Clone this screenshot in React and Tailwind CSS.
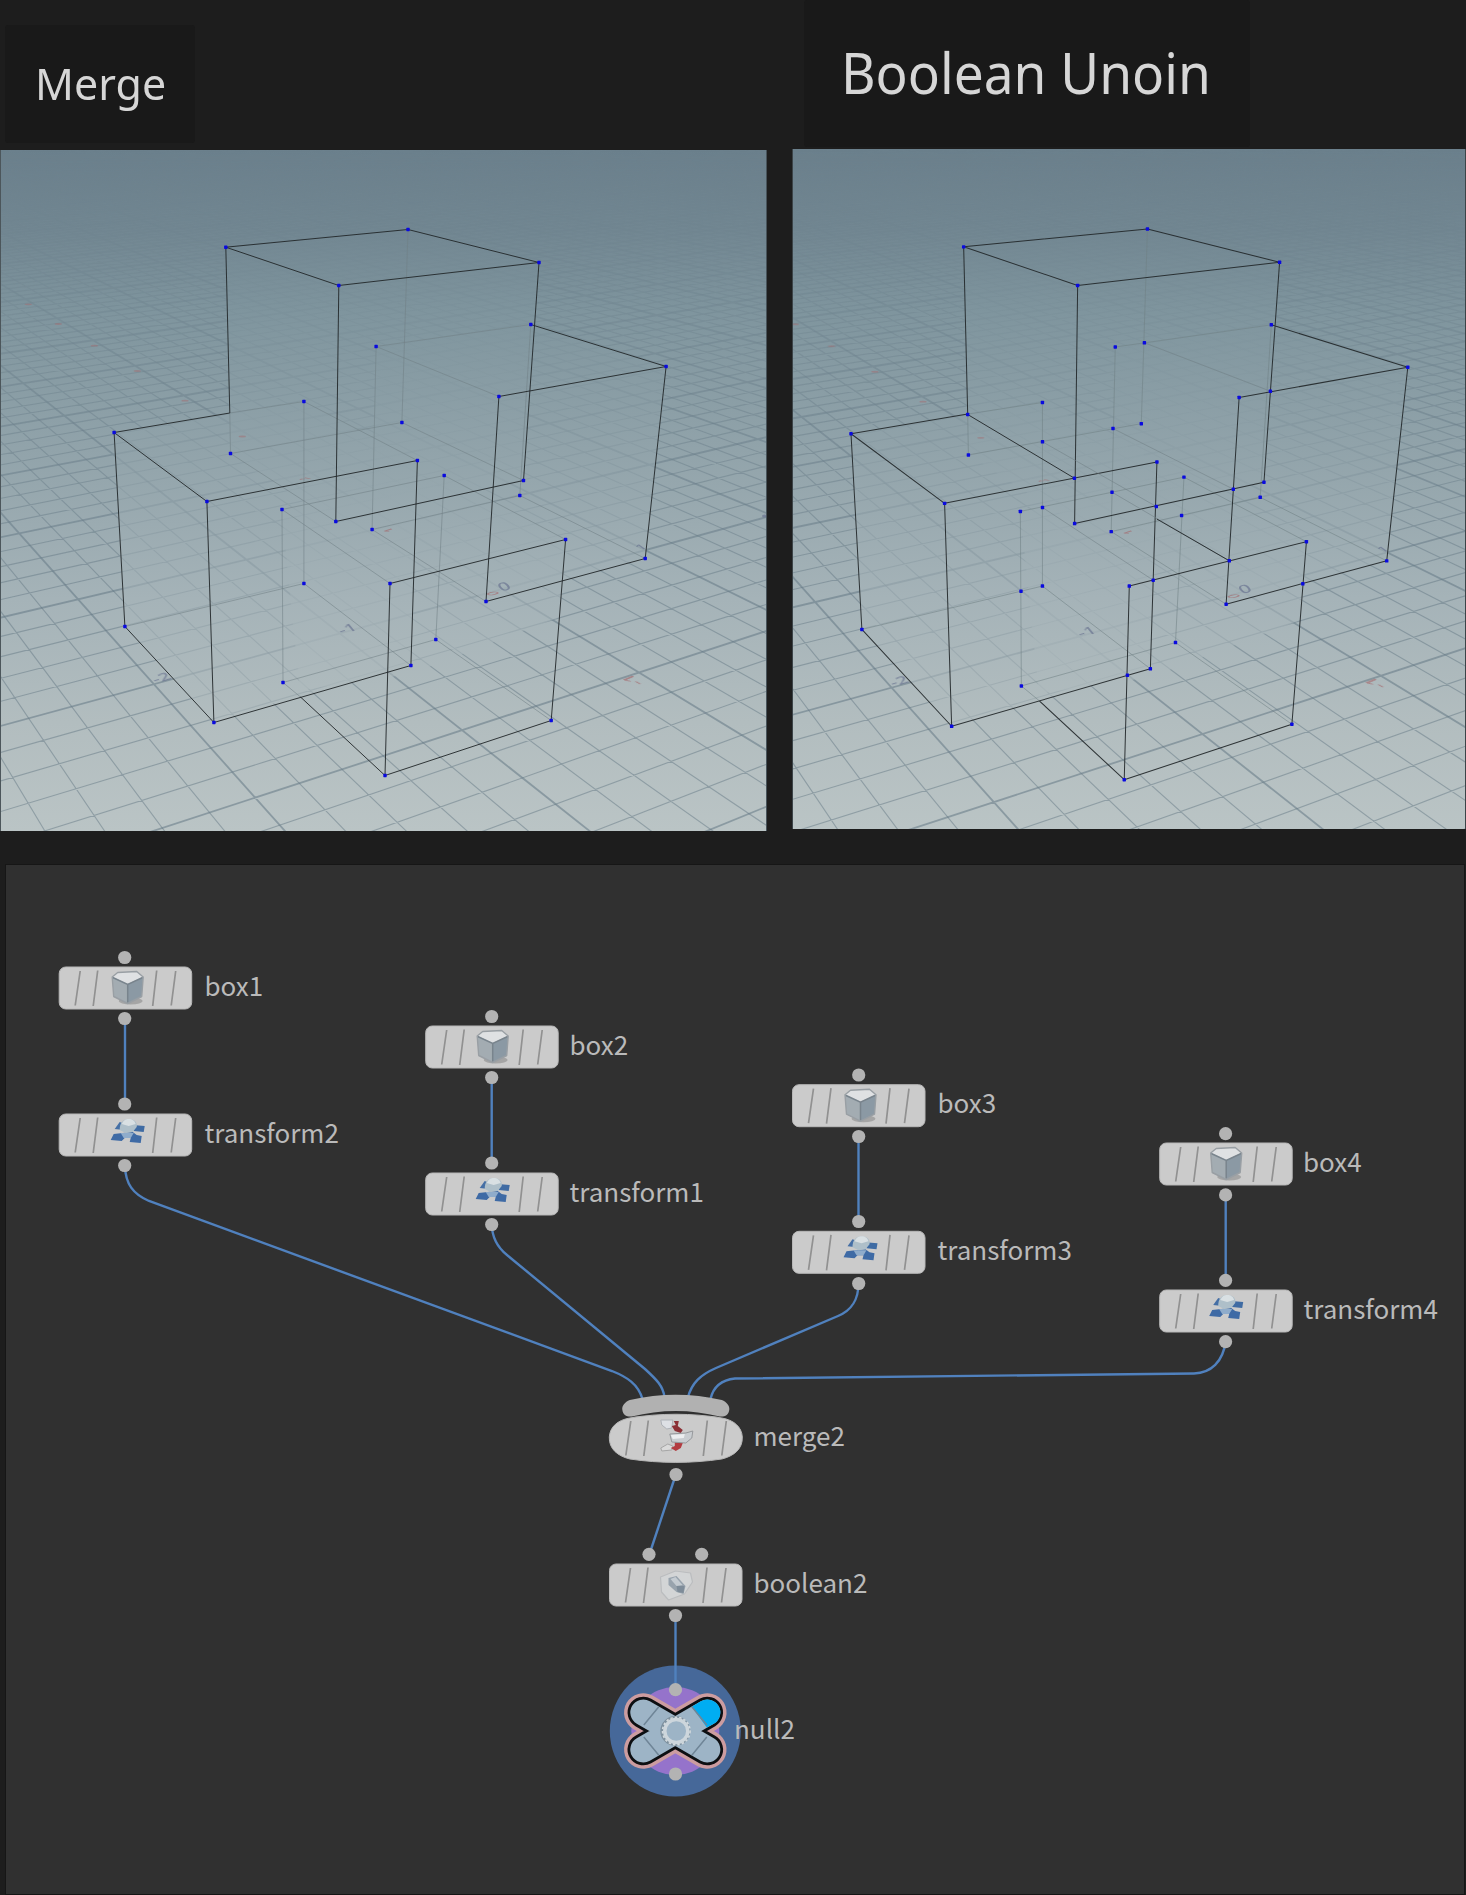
import React from "react";

/* ---------- ground plane projection ---------- */

// [grid u, grid v, screen x, screen y]
const ANCHORS = [
  [1, 1, 153.3, 684.3],
  [1, 2, 254, 797.7],
  [2, 2, 462.7, 730],
  [3, 2, 639.3, 672.3],
  [4, 1, 645, 550.3],
  [1, 0, 79, 600],
  [3, 1, 502, 588.8],
  [3, -3, 184, 396],
  [2, -3, 64, 415],
  [1, -1, 19.6, 533.4],
];

function solve(m, r) {
  const n = r.length;
  const a = m.map((row, i) => [...row, r[i]]);
  for (let c = 0; c < n; c++) {
    let p = c;
    for (let i = c + 1; i < n; i++) if (Math.abs(a[i][c]) > Math.abs(a[p][c])) p = i;
    [a[c], a[p]] = [a[p], a[c]];
    for (let i = 0; i < n; i++) {
      if (i === c) continue;
      const f = a[i][c] / a[c][c];
      for (let k = c; k <= n; k++) a[i][k] -= f * a[c][k];
    }
  }
  return a.map((row, i) => row[n] / row[i]);
}

function fitPlane() {
  const rows = [];
  const rhs = [];
  ANCHORS.forEach(([u, v, x, y]) => {
    rows.push([u, v, 1, 0, 0, 0, -u * x, -v * x]);
    rhs.push(x);
    rows.push([0, 0, 0, u, v, 1, -u * y, -v * y]);
    rhs.push(y);
  });
  const ata = Array.from({ length: 8 }, (_, i) =>
    Array.from({ length: 8 }, (_, j) => rows.reduce((s, r) => s + r[i] * r[j], 0))
  );
  const atb = Array.from({ length: 8 }, (_, i) => rows.reduce((s, r, k) => s + r[i] * rhs[k], 0));
  return solve(ata, atb);
}

const H = fitPlane();
const project = (u, v) => {
  const w = H[6] * u + H[7] * v + 1;
  return [(H[0] * u + H[1] * v + H[2]) / w, (H[3] * u + H[4] * v + H[5]) / w];
};

function gridPath(fixed, from, to, major) {
  let d = "";
  for (let i = from * 5; i <= to * 5; i++) {
    if ((i % 5 === 0) !== major) continue;
    const t = i / 5;
    const p = fixed === "v" ? project(1, t) : project(t, 1);
    const q = fixed === "v" ? project(3, t) : project(t, -2);
    const s = (q[1] - p[1]) / (q[0] - p[0]);
    d += `M-10 ${(p[1] + s * (-10 - p[0])).toFixed(1)}L790 ${(p[1] + s * (790 - p[0])).toFixed(1)}`;
  }
  return d;
}

const MINOR = gridPath("v", -36, 4, false) + gridPath("u", 0, 36, false);
const MAJOR = gridPath("v", -36, 4, true) + gridPath("u", 0, 36, true);

/* ---------- boxes ---------- */

const P = {
  a0: [225.3, 246.7], a1: [407.5, 229], a2: [538.5, 262], a3: [338.3, 285],
  a4: [230, 453], a5: [401.4, 422], a6: [523, 480], a7: [335.3, 521],
  c0: [375.6, 346], c1: [530.3, 324], c2: [665.6, 366], c3: [498.4, 396],
  c4: [371.6, 529], c5: [519.3, 495], c6: [644.7, 558], c7: [485.5, 601],
  l0: [113.6, 432], l1: [303.4, 401], l2: [416.9, 460], l3: [206.4, 501],
  l4: [124.4, 626], l5: [303.4, 583], l6: [410.4, 665], l7: [213.4, 722],
  f0: [281.5, 509], f1: [443.7, 475], f2: [565.1, 539], f3: [389.5, 583],
  f4: [282.5, 682], f5: [435.3, 639], f6: [550.7, 720], f7: [384.5, 775],
  m: [229.3, 412.5], n: [300, 696.5],
};
const path = (list) =>
  list
    .split(" ")
    .map((e) => {
      const [s, t] = e.split("-");
      return `M${P[s]}L${P[t]}`;
    })
    .join("");

const DARK = path(
  "a0-a1 a1-a2 a2-a3 a3-a0 a0-m a3-a7 a2-a6 a7-a6 c1-c2 c2-c3 c3-c7 c2-c6 c7-c6 l0-m l0-l3 l3-l2 l0-l4 l3-l7 l2-l6 l4-l7 l7-l6 f3-f2 f3-f7 f2-f6 n-f7 f7-f6"
);
const FAINT = path(
  "m-a4 a1-a5 a4-a5 c0-c1 c0-c4 c1-c5 c4-c5 c5-c6 m-l1 l1-l5 l4-l5 l5-l6 f0-f1 f0-f4 f1-f5 f4-f5 f5-f6 f4-n c4-c7 f1-f2"
);
const FAINT_MERGE = path("a4-a7 a5-a6 c0-c3 l1-l2 f0-f3");

const POINTS = Object.entries(P).filter(([k]) => k !== "m" && k !== "n").map(([, p]) => p);

const UNION_POINTS = [
  [967.7, 414], [1144.4, 342.3], [1270.4, 390.7], [1042.5, 441.3], [1113, 428],
  [1074.4, 477.7], [1156.3, 506], [1233.3, 488.7], [1112, 491.7], [1181.6, 515],
  [1042.5, 507], [1229.3, 560.3], [1153.2, 579.7], [1302.8, 583.3], [1021, 590.7],
  [1127.4, 674.7],
];

const HULLS = [
  "225.3,246.7 407.5,229 538.5,262 523,480 335.3,521 230,453",
  "375.6,346 530.3,324 665.6,366 644.7,558 485.5,601 371.6,529",
  "113.6,432 303.4,401 416.9,460 410.4,665 213.4,722 124.4,626",
  "281.5,509 443.7,475 565.1,539 560,617 410,674 300,690",
];

const RED_TICKS = [
  [242.3, 436.5], [185, 400.7], [137.3, 371], [94.3, 345.7], [58.3, 324], [28.3, 304.3],
];

function Sky({ id, top, bottom }) {
  return (
    <defs>
      <linearGradient id={id} gradientUnits="userSpaceOnUse" x1="0" x2="0" y1={top} y2={bottom}>
        <stop offset="0" stopColor="#6b808c" />
        <stop offset="0.12" stopColor="#728792" />
        <stop offset="0.24" stopColor="#7f959e" />
        <stop offset="0.44" stopColor="#91a3aa" />
        <stop offset="0.66" stopColor="#a5b3b8" />
        <stop offset="0.84" stopColor="#b2bdbf" />
        <stop offset="1" stopColor="#bac4c5" />
      </linearGradient>
      <linearGradient id={id + "-fade"} gradientUnits="userSpaceOnUse" x1="0" x2="0" y1={top} y2={bottom}>
        <stop offset="0" stopColor="#fff" stopOpacity="0" />
        <stop offset="0.08" stopColor="#fff" stopOpacity="0.1" />
        <stop offset="0.2" stopColor="#fff" stopOpacity="0.42" />
        <stop offset="0.4" stopColor="#fff" stopOpacity="0.8" />
        <stop offset="0.65" stopColor="#fff" stopOpacity="1" />
      </linearGradient>
      <mask id={id + "-mask"} maskUnits="userSpaceOnUse" x="-20" y="100" width="820" height="760">
        <rect x="-20" y="100" width="820" height="760" fill={`url(#${id}-fade)`} />
      </mask>
    </defs>
  );
}

function Ground({ id, edgeMark }) {
  return (
    <g>
      <g mask={`url(#${id}-mask)`} fill="none" stroke="#657985">
        <path d={MINOR} strokeWidth="1.1" opacity="0.5" />
        <path d={MAJOR} strokeWidth="1.8" opacity="0.55" />
      </g>
      {HULLS.map((h) => (
        <polygon key={h} points={h} fill={`url(#${id})`} opacity="0.58" />
      ))}
      <g fontFamily="'Noto Sans', sans-serif" fontSize="17" fontWeight="500" textAnchor="middle" opacity="0.65">
        <g fill="#66708e">
          <text transform="matrix(1.1 -.34 .5 .6 164 681)">-2</text>
          <text transform="matrix(1.1 -.34 .5 .6 350 632)">-1</text>
          <text transform="matrix(1.1 -.34 .5 .6 507 590)">0</text>
          <text transform="matrix(.9 -.24 .5 .35 644 549)">1</text>
          {edgeMark && <ellipse cx="764.500" cy="516" rx="2.500" ry="1.500" />}
        </g>
        <g fill="#a5686c">
          <text transform="matrix(-1.1 -.6 .8 -.34 637 678)">-1</text>
          <text transform="matrix(-.9 -.2 .7 -.24 497 592)">0</text>
          <text transform="matrix(-.8 -.3 .6 -.2 392 529)">1</text>
          <text transform="matrix(-.7 -.1 .6 -.15 308 478)">2</text>
          {RED_TICKS.map(([x, y]) => (
            <ellipse key={x} cx={x} cy={y} rx="3.6" ry="0.9" opacity="0.7" />
          ))}
        </g>
      </g>
    </g>
  );
}

function Dots({ points }) {
  return points.map(([x, y]) => (
    <rect key={`${x},${y}`} x={x - 1.7} y={y - 1.7} width="3.4" height="3.4" rx="0.6" fill="#0a0adf" />
  ));
}

const LINE = { fill: "none", stroke: "#23282a", strokeWidth: 1, opacity: 0.92 };
const HIDDEN = { fill: "none", stroke: "#6f7f84", strokeWidth: 0.9, opacity: 0.6 };

function MergeView() {
  return (
    <svg viewBox="0 150 767 681" className="block h-[681px] w-[767px]">
      <Sky id="sky1" top="149" bottom="831" />
      <rect x="0" y="149" width="767" height="683" fill="url(#sky1)" />
      <Ground id="sky1" edgeMark />
      <g transform="translate(.5 .5)">
        <path d={FAINT + FAINT_MERGE} {...HIDDEN} />
        <path d={DARK} {...LINE} />
        <Dots points={POINTS} />
      </g>
      <path d="M.5 149V832" stroke="#4c565b" />
      <path d="M766.500 149V832" stroke="#48545b" />
    </svg>
  );
}

function UnionView() {
  return (
    <svg viewBox="792 149 674 680" className="block h-[680px] w-[674px]">
      <g transform="translate(736.4 -2.5) scale(1.0087)">
        <Sky id="sky2" top="150" bottom="825" />
        <rect x="40" y="148" width="700" height="685" fill="url(#sky2)" />
        <Ground id="sky2" />
      </g>
      <g transform="translate(0 .5)">
        <g transform="translate(736.4 -2.5) scale(1.0087)">
          <path d={FAINT} {...HIDDEN} />
          <path d={DARK} {...LINE} />
        </g>
        <path
          d="M1144.4 342.3L1270.4 390.7M1113 428L1233.3 488.7M1042.5 441.3L1156.3 506M1112 491.7L1229.3 560.3M1042.5 507L1153.2 579.7"
          {...HIDDEN}
        />
        <path d="M967.7 414L1074.4 477.7M1156.8 518.5L1229.3 560.3" {...LINE} />
        <g transform="translate(736.4 -2.5) scale(1.0087)">
          <Dots points={POINTS} />
        </g>
        <Dots points={UNION_POINTS} />
      </g>
      <path d="M1465.5 148V830M792.500 148V830" stroke="#3c4448" />
    </svg>
  );
}

/* ---------- node graph ---------- */

const NODES = [
  { name: "box1", type: "box", x: 125.2, y: 988, ix: 2.5, lx: 204.5 },
  { name: "transform2", type: "xform", x: 125.2, y: 1135, ix: 2.5, lx: 204.5 },
  { name: "box2", type: "box", x: 491.7, y: 1047, ix: 1, lx: 569.5 },
  { name: "transform1", type: "xform", x: 491.7, y: 1194, ix: 1, lx: 569.5 },
  { name: "box3", type: "box", x: 858.5, y: 1105.7, ix: 2, lx: 937.5 },
  { name: "transform3", type: "xform", x: 858.5, y: 1252.3, ix: 2, lx: 937.5 },
  { name: "box4", type: "box", x: 1225.7, y: 1164, ix: 0.5, lx: 1303 },
  { name: "transform4", type: "xform", x: 1225.7, y: 1311, ix: 0.5, lx: 1303.5 },
  { name: "merge2", type: "merge", x: 675.8, y: 1438, ix: 0, lx: 753.5 },
  { name: "boolean2", type: "boolean", x: 675.5, y: 1585, ix: 0, lx: 753.5 },
  { name: "null2", type: "null", x: 675.3, y: 1731, ix: 0, lx: 734 },
];

function BoxIcon() {
  return (
    <g>
      <ellipse cx="3" cy="13" rx="12" ry="3.5" fill="#a5a5a5" />
      <path d="M-15.5-11L-14 8.500L0 15.500V-4Z" fill="#a3acb2" />
      <path d="M0-4V15.500L14 8.500L15.500-11Z" fill="#8b99a4" />
      <path d="M-15.500-11.500L-10-15.500L9-16.500L15.500-11.500L0-4Z" fill="#dfe1e3" />
      <path d="M-15-10.500L0-3.500L15-10.500M0-3.500V15" fill="none" stroke="#79848d" strokeWidth="1.5" />
      <path d="M-15.500-11L-14 8.500L0 15.500L14 8.500L15.500-11L9-16.500L-10-15.500Z" fill="none" stroke="#999fa4" strokeWidth="1.4" strokeLinejoin="round" />
    </g>
  );
}

function TransformIcon() {
  return (
    <g>
      <path d="M-8-13L-13-6L-4-5L0-10Z" fill="#456fa5" />
      <path d="M5-10L17-9L16-3L6-4Z" fill="#3f6ba3" />
      <path d="M-14-1L-5-2L5-3L9 0L14 1L13 8L2 7L3 3L-3 3L-6 6L-17 5Z" fill="#3e6aa5" />
      <path d="M-7-2L6-2L3 3L-4 3Z" fill="#8faccb" />
      <path d="M-8-5C-8-12 -5-16 1-16C7-16 10-12 9-8L5-3L-2-2Z" fill="#aebfc9" />
      <path d="M-6-11C-4-15 -2-16 1-16C5-16 7-14 8-11L1-9Z" fill="#d9e0e3" />
    </g>
  );
}

function MergeIcon() {
  return (
    <g>
      <path d="M-15-18L-3-18L-4-10L-9-9L-14-13Z" fill="#dde0e5" stroke="#aeb2b8" />
      <path d="M-15 10L-8 6L-3 8L-4 12L-14 13Z" fill="#dadada" stroke="#a6a6a6" />
      <path d="M-2-17L3-17L2-12L7-8L5-5L-1-7L-4-12L0-13Z" fill="#8b3036" />
      <path d="M-1 4L7 5L5 10L0 13L-5 10L-1 8Z" fill="#b23b40" />
      <path d="M-6-4L10-5L17-7L16 0L10 5L-4 4Z" fill="#c9cdd1" stroke="#96999c" />
      <path d="M-5-3L9-4L8 0L-3 1Z" fill="#eceef0" />
    </g>
  );
}

function BooleanIcon() {
  return (
    <g>
      <path d="M-15-8L0-14L15-12L17-3L9 9L-7 15L-14 7Z" fill="#d3d5d6" stroke="#bbbdbf" strokeWidth="1.2" strokeLinejoin="round" />
      <path d="M-7-7L1-9L10 1L8 9L1 7L-7 0Z" fill="#98a3ad" />
      <path d="M-5-6L0-8L7 0L1 1Z" fill="#c4cbd1" />
      <path d="M1 1L9 1L8 8L2 7Z" fill="#7e8c99" />
    </g>
  );
}

const ICONS = { box: BoxIcon, xform: TransformIcon, merge: MergeIcon, boolean: BooleanIcon };

function Port({ x, y }) {
  return <circle cx={x} cy={y} r="6.6" fill="#b3b3b3" />;
}

function NodeShape({ type, ix }) {
  const Icon = ICONS[type];
  const round = type === "merge";
  return (
    <g>
      {round ? (
        <>
          <path d="M-53.500-28.500C-54-32-51-36-46-38C-15-45 15-45 46-38C51-36 54-32 53.500-28.500C53-23 49-21 44-21.500C15-29 -15-29 -44-21.500C-49-21 -53-23 -53.500-28.500Z" fill="#b1b1b1" />
          <path d="M-66.500-1C-66-11-58-18-46-20C-16-25 16-25 46-20C58-18 66-11 66.500-1C67 11 58 18 46 21C16 25.500 -16 25.500 -46 21C-58 18 -67 11 -66.500-1Z" fill="#cbcbcb" stroke="#b8b8b8" />
        </>
      ) : (
        <rect x="-66" y="-21" width="132.500" height="42" rx="6.500" fill="#cbcbcb" stroke="#b8b8b8" />
      )}
      <path
        d="M-45-17L-50 17.500M-27.500-17.500L-32 18M31.500-17.500L27.500 18M50.500-17L46 17.500"
        fill="none"
        stroke="#919191"
        strokeWidth="1.7"
      />
      <g transform={`translate(${ix} 0)`}>
        <Icon />
      </g>
    </g>
  );
}

function NullNode() {
  const arms = "M-32-18.500L32 18.500M-32 18.500L32-18.500";
  return (
    <g>
      <circle r="65.500" fill="#466899" />
      <circle r="44" fill="#9573cb" />
      <g fill="none" strokeLinecap="round">
        <path d={arms} stroke="#cc9ca0" strokeWidth="38.500" />
        <path d={arms} stroke="#0d0f12" strokeWidth="31.500" />
        <path d={arms} stroke="#9db4c6" strokeWidth="26" />
      </g>
      <path d="M16.500-24.200L25.600-29.800A13 13 0 0 1 38.500-7.200L31.500-3.500Z" fill="#00adf2" />
      <path d="M16.500-24.200L31.500-6M-16.500-24.200L-31.500-6M-16.500 24.200L-31.500 6M16.500 24.200L31.500 6" stroke="#6f8597" strokeWidth="1.500" />
      <circle r="13.500" fill="#9db4c6" stroke="#7d909e" strokeWidth="3" />
      <circle r="11.500" cx="1" fill="#9db4c6" stroke="#cdd6dc" strokeWidth="3.500" />
      <circle r="13.800" cx="1" fill="none" stroke="#d3dade" strokeWidth="1.600" strokeDasharray="2.500 2" />
    </g>
  );
}

const WIRES = [
  "M125 1018V1104",
  "M491.700 1077V1163",
  "M858.500 1136V1222",
  "M1225.700 1195V1281",
  "M125 1166C125.500 1184 133 1194 149 1201L612 1371C627 1377 638 1384 642.500 1399",
  "M491.700 1224C492 1237 497 1247 507 1255L645 1369C657 1380 663 1386 664.500 1397",
  "M858.500 1283C858.500 1300 852 1310 838 1316L716 1368C700 1375 692 1383 688 1397",
  "M1225.700 1341C1223 1362 1211 1373 1194 1373.500L735 1378.500C721 1380 713 1388 710.500 1399",
  "M676 1474L649.500 1554",
  "M675.500 1615V1690",
];

const PORTS = [
  [124.7, 957.5], [124.7, 1018.5], [124.7, 1104], [124.7, 1165.5],
  [491.7, 1016.5], [491.7, 1077.5], [491.7, 1163], [491.7, 1224.5],
  [858.7, 1075], [858.7, 1136.5], [858.7, 1221.5], [858.7, 1283.5],
  [1225.6, 1133.7], [1225.6, 1194.9], [1225.6, 1280.3], [1225.6, 1341.7],
  [676, 1474.5], [649, 1554.3], [701.7, 1554.3], [675.5, 1615.5],
  [675.5, 1689.7], [675.5, 1774],
];

function NodeGraph() {
  return (
    <section className="relative ml-[5px] h-[1031px] w-[1460px] overflow-hidden border border-[#161616] bg-[#303030]">
      <svg viewBox="6 865 1458 1029" className="block h-[1029px] w-[1458px]">
        {NODES.filter((n) => n.type === "null").map((n) => (
          <g key={n.name} transform={`translate(${n.x} ${n.y})`}>
            <NullNode />
          </g>
        ))}
        <g fill="none" stroke="#5081be" strokeWidth="2.400">
          {WIRES.map((d) => (
            <path key={d} d={d} />
          ))}
        </g>
        {NODES.filter((n) => n.type !== "null").map((n) => (
          <g key={n.name} transform={`translate(${n.x} ${n.y})`}>
            <NodeShape type={n.type} ix={n.ix} />
          </g>
        ))}
        {PORTS.map(([x, y]) => (
          <Port key={`${x},${y}`} x={x} y={y} />
        ))}
      </svg>
      {NODES.map((n) => (
        <span
          key={n.name}
          className="absolute font-['Noto_Sans_CJK_SC',sans-serif] text-[26px] leading-[32px] whitespace-nowrap text-[#bababa]"
          style={{ left: n.lx - 6, top: n.y - 865 + 8 - 27.3 }}
        >
          {n.name}
        </span>
      ))}
    </section>
  );
}

export default function App() {
  return (
    <main className="h-[1895px] w-[1466px] overflow-hidden bg-[#1d1d1d] font-['Noto_Sans',sans-serif] text-[#d6d6d6]">
      <div className="flex h-[864px] gap-[25px]">
        <section className="flex w-[767px] flex-col">
          <header className="h-[150px] pt-[25px] pl-[5px]">
            <h2 className="flex h-[118px] w-[190px] items-center rounded-[3px] bg-[#191919] pb-[2px] pl-[30px] text-[44.5px] leading-none">
              <span className="inline-block origin-left scale-x-[0.965]">Merge</span>
            </h2>
          </header>
          <MergeView />
        </section>
        <section className="flex w-[674px] flex-col">
          <header className="h-[149px] pl-[12px]">
            <h2 className="flex h-[147px] w-[446px] items-center rounded-[3px] bg-[#191919] pb-[3px] pl-[37px] text-[56px] leading-none whitespace-nowrap">
              <span className="inline-block origin-left scale-x-[0.95]">Boolean Unoin</span>
            </h2>
          </header>
          <UnionView />
        </section>
      </div>
      <NodeGraph />
    </main>
  );
}
